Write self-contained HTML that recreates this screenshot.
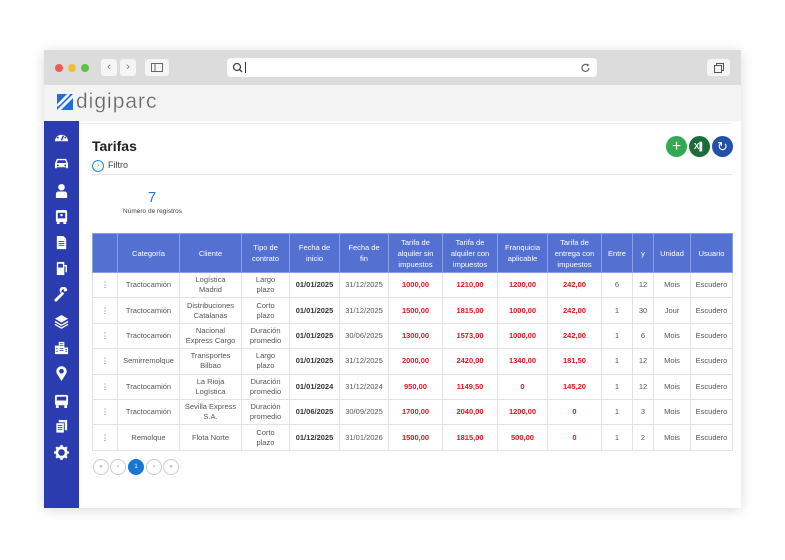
<!DOCTYPE html><html><head><meta charset="utf-8"><style>
*{margin:0;padding:0;box-sizing:border-box}
body{width:785px;height:560px;background:#fff;font-family:"Liberation Sans",sans-serif;position:relative;overflow:hidden}
.win{position:absolute;left:44px;top:50px;width:697px;height:458px;box-shadow:0 2px 12px rgba(0,0,0,.15);background:#fff}
.tb{position:absolute;left:0;top:0;width:697px;height:35px;background:#dcdcdc}
.dot{position:absolute;top:14px;width:8px;height:8px;border-radius:50%}
.btn{position:absolute;top:9px;height:17px;background:#f5f5f5;border-radius:3px;color:#777;font-size:11px;text-align:center;line-height:16px}
.url{position:absolute;left:183px;top:8px;width:370px;height:19px;background:#fff;border-radius:4px}
.lb{position:absolute;left:0;top:35px;width:697px;height:36px;background:#f3f3f3}
.side{position:absolute;left:0;top:71px;width:35px;height:387px;background:#2a3cb0}
.side svg{position:absolute;left:10px;width:15px;height:15px}
table{position:absolute;left:92px;top:233px;border-collapse:collapse;font-size:7.5px;color:#555;table-layout:fixed}
th{background:#5471d1;color:#fff;font-weight:normal;height:39px;border:1px solid #8aa0e4;font-size:7.5px;line-height:11px}
td{height:25.4px;border:1px solid #e2e2e2;text-align:center;line-height:10px}
.r{color:#e0141e;font-weight:bold}.b{color:#333;font-weight:bold}
.pg{position:absolute;top:459px;width:16px;height:16px;border:1px solid #ccc;border-radius:50%;font-size:6px;color:#888;text-align:center;line-height:14px;background:#fff}
.cb{position:absolute;top:136px;width:21px;height:21px;border-radius:50%;color:#fff;text-align:center;line-height:21px;font-size:16px}
</style></head><body>
<div class="win">
<div class="tb">
<div class="dot" style="left:11px;background:#ee5b52"></div><div class="dot" style="left:24px;background:#f4bd36"></div><div class="dot" style="left:37px;background:#5ac144"></div>
<div class="btn" style="left:57px;width:16px">‹</div><div class="btn" style="left:76px;width:16px">›</div>
<div class="btn" style="left:101px;width:24px"><svg width="12" height="9" style="margin-top:4px"><rect x="0.5" y="0.5" width="11" height="8" fill="none" stroke="#666"/><line x1="4" y1="0" x2="4" y2="9" stroke="#666"/></svg></div>
<div class="url"><svg width="12" height="12" style="position:absolute;left:5px;top:4px"><circle cx="5" cy="5" r="3.5" fill="none" stroke="#444" stroke-width="1.3"/><line x1="7.5" y1="7.5" x2="10" y2="10" stroke="#444" stroke-width="1.3"/></svg><div style="position:absolute;left:18px;top:4px;width:1px;height:11px;background:#333"></div><svg width="10" height="10" style="position:absolute;right:6px;top:5px"><path d="M8 5A3.5 3.5 0 1 1 6.5 2" fill="none" stroke="#666" stroke-width="1.2"/><path d="M6 0.5L8.5 2 6 3.5Z" fill="#666"/></svg></div>
<div class="btn" style="left:663px;width:23px;background:#f5f5f5"><svg width="10" height="10" style="margin-top:4px"><rect x="0.5" y="2.5" width="7" height="7" fill="none" stroke="#555"/><path d="M2.5 2.5V0.5H9.5V7.5H7.5" fill="none" stroke="#555"/></svg></div>
</div>
<div class="lb"><svg width="16" height="16" style="position:absolute;left:13px;top:9px"><path d="M0 0H16L0 16Z" fill="#1f6fd4"/><path d="M4 16L16 4V16Z" fill="#1f6fd4"/><path d="M0 12L12 0" stroke="#fff" stroke-width="2.5"/></svg><span style="position:absolute;left:32px;top:5px;font-size:21px;color:#666;letter-spacing:1px;-webkit-text-stroke:0.3px #f3f3f3">digiparc</span></div>
<div class="side">
<svg style="top:9px" viewBox="0 0 16 16"><path d="M1 12A7 7 0 1 1 15 12Z" fill="#fff"/><path d="M8 11L10 6" stroke="#2a3cb0" stroke-width="1.5"/><circle cx="4" cy="8" r="1" fill="#2a3cb0"/><circle cx="12" cy="8" r="1" fill="#2a3cb0"/><circle cx="8" cy="4" r="1" fill="#2a3cb0"/></svg>
<svg style="top:35px" viewBox="0 0 16 16"><path d="M1 8L3 3H13L15 8V13H13V12H3V13H1Z" fill="#fff"/><path d="M4 4.5H12L13 7.5H3Z" fill="#2a3cb0"/><circle cx="4" cy="10" r="1" fill="#2a3cb0"/><circle cx="12" cy="10" r="1" fill="#2a3cb0"/></svg>
<svg style="top:62px" viewBox="0 0 16 16"><circle cx="8" cy="4.5" r="3.5" fill="#fff"/><path d="M2 16V12Q2 9 5 9H11Q14 9 14 12V16Z" fill="#fff"/></svg>
<svg style="top:88px" viewBox="0 0 16 16"><rect x="2" y="1" width="12" height="13" rx="2" fill="#fff"/><rect x="4" y="4" width="8" height="6" fill="#2a3cb0"/><circle cx="8" cy="6.5" r="1.3" fill="#fff"/><rect x="3" y="14" width="3" height="2" fill="#fff"/><rect x="10" y="14" width="3" height="2" fill="#fff"/></svg>
<svg style="top:114px" viewBox="0 0 16 16"><path d="M3 1H10L13 4V15H3Z" fill="#fff"/><path d="M5 7H11M5 9H11M5 11H11" stroke="#2a3cb0"/></svg>
<svg style="top:140px" viewBox="0 0 16 16"><rect x="3" y="1" width="8" height="14" fill="#fff"/><rect x="4.5" y="3" width="5" height="4" fill="#2a3cb0"/><path d="M11 5H13V12" stroke="#fff" stroke-width="1.5" fill="none"/></svg>
<svg style="top:166px" viewBox="0 0 16 16"><path d="M2 14L9 7" stroke="#fff" stroke-width="3" stroke-linecap="round"/><path d="M8 7A4 4 0 1 1 14 4L11 5L10 2A4 4 0 0 0 8 7Z" fill="#fff"/></svg>
<svg style="top:193px" viewBox="0 0 16 16"><path d="M8 1L15 5L8 9L1 5Z" fill="#fff"/><path d="M1 8L8 12L15 8M1 11L8 15L15 11" stroke="#fff" stroke-width="1.5" fill="none"/></svg>
<svg style="top:219px" viewBox="0 0 16 16"><path d="M1 15V6H5V2H11V8H15V15Z" fill="#fff"/><path d="M6 4H10M6 6H10M6 9H10M6 11H10M2 9H4M2 12H4M12 10H14M12 12H14" stroke="#2a3cb0" stroke-width="0.8"/></svg>
<svg style="top:245px" viewBox="0 0 16 16"><path d="M8 16L3 8A5.5 5.5 0 1 1 13 8Z" fill="#fff"/><circle cx="8" cy="5.5" r="2.5" fill="#2a3cb0"/></svg>
<svg style="top:272px" viewBox="0 0 16 16"><rect x="1" y="2" width="14" height="11" rx="2" fill="#fff"/><rect x="3" y="4" width="10" height="4" fill="#2a3cb0"/><rect x="2" y="13" width="3" height="3" fill="#fff"/><rect x="11" y="13" width="3" height="3" fill="#fff"/></svg>
<svg style="top:298px" viewBox="0 0 16 16"><rect x="5" y="1" width="9" height="11" fill="#fff"/><rect x="2" y="4" width="9" height="11" fill="#fff" stroke="#2a3cb0"/><path d="M4 7H9M4 9H9M4 11H9" stroke="#2a3cb0"/></svg>
<svg style="top:324px" viewBox="0 0 16 16"><circle cx="8" cy="8" r="5" fill="none" stroke="#fff" stroke-width="3"/><path d="M8 0V3M8 13V16M0 8H3M13 8H16M2.3 2.3L4.5 4.5M11.5 11.5L13.7 13.7M2.3 13.7L4.5 11.5M11.5 4.5L13.7 2.3" stroke="#fff" stroke-width="2.5"/><circle cx="8" cy="8" r="2" fill="#2a3cb0"/></svg>
</div>
</div>
<div style="position:absolute;left:79px;top:123px;width:653px;height:1px;background:#eee"></div>
<div style="position:absolute;left:92px;top:138px;font-size:14px;font-weight:bold;color:#222">Tarifas</div>
<div style="position:absolute;left:92px;top:160px;width:12px;height:12px;border:1px solid #2a8ad8;border-radius:50%;font-size:7px;color:#2a8ad8;text-align:center;line-height:10px">›</div>
<div style="position:absolute;left:108px;top:160px;font-size:9px;color:#444">Filtro</div>
<div style="position:absolute;left:92px;top:174px;width:640px;height:1px;background:#e5e5e5"></div>
<div class="cb" style="left:666px;background:#34a853">+</div>
<div class="cb" style="left:689px;background:#1d6b3b;font-size:8px;font-weight:bold">X▌</div>
<div class="cb" style="left:712px;background:#2350a8;font-size:13px">↻</div>
<div style="position:absolute;left:142px;top:189px;font-size:15px;color:#2a7ad8;width:20px;text-align:center">7</div>
<div style="position:absolute;left:110px;top:208px;width:85px;font-size:6.5px;color:#444;text-align:center">Número de registros</div>
<table>
<colgroup><col style="width:25px"><col style="width:62px"><col style="width:62px"><col style="width:48px"><col style="width:50px"><col style="width:49px"><col style="width:54px"><col style="width:55px"><col style="width:50px"><col style="width:54px"><col style="width:31px"><col style="width:21px"><col style="width:37px"><col style="width:42px"></colgroup>
<tr><th></th><th>Categoría</th><th>Cliente</th><th>Tipo de<br>contrato</th><th>Fecha de<br>inicio</th><th>Fecha de<br>fin</th><th>Tarifa de<br>alquiler sin<br>impuestos</th><th>Tarifa de<br>alquiler con<br>impuestos</th><th>Franquicia<br>aplicable</th><th>Tarifa de<br>entrega con<br>impuestos</th><th>Entre</th><th>y</th><th>Unidad</th><th>Usuario</th></tr>
<tr><td>⋮</td><td>Tractocamión</td><td>Logística<br>Madrid</td><td>Largo<br>plazo</td><td class="b">01/01/2025</td><td>31/12/2025</td><td class="r">1000,00</td><td class="r">1210,00</td><td class="r">1200,00</td><td class="r">242,00</td><td>6</td><td>12</td><td>Mois</td><td>Escudero</td></tr>
<tr><td>⋮</td><td>Tractocamión</td><td>Distribuciones<br>Catalanas</td><td>Corto<br>plazo</td><td class="b">01/01/2025</td><td>31/12/2025</td><td class="r">1500,00</td><td class="r">1815,00</td><td class="r">1000,00</td><td class="r">242,00</td><td>1</td><td>30</td><td>Jour</td><td>Escudero</td></tr>
<tr><td>⋮</td><td>Tractocamión</td><td>Nacional<br>Express Cargo</td><td>Duración<br>promedio</td><td class="b">01/01/2025</td><td>30/06/2025</td><td class="r">1300,00</td><td class="r">1573,00</td><td class="r">1000,00</td><td class="r">242,00</td><td>1</td><td>6</td><td>Mois</td><td>Escudero</td></tr>
<tr><td>⋮</td><td>Semirremolque</td><td>Transportes<br>Bilbao</td><td>Largo<br>plazo</td><td class="b">01/01/2025</td><td>31/12/2025</td><td class="r">2000,00</td><td class="r">2420,00</td><td class="r">1340,00</td><td class="r">181,50</td><td>1</td><td>12</td><td>Mois</td><td>Escudero</td></tr>
<tr><td>⋮</td><td>Tractocamión</td><td>La Rioja<br>Logística</td><td>Duración<br>promedio</td><td class="b">01/01/2024</td><td>31/12/2024</td><td class="r">950,00</td><td class="r">1149,50</td><td class="r">0</td><td class="r">145,20</td><td>1</td><td>12</td><td>Mois</td><td>Escudero</td></tr>
<tr><td>⋮</td><td>Tractocamión</td><td>Sevilla Express<br>S.A.</td><td>Duración<br>promedio</td><td class="b">01/06/2025</td><td>30/09/2025</td><td class="r">1700,00</td><td class="r">2040,00</td><td class="r">1200,00</td><td class="r">0</td><td>1</td><td>3</td><td>Mois</td><td>Escudero</td></tr>
<tr><td>⋮</td><td>Remolque</td><td>Flota Norte</td><td>Corto<br>plazo</td><td class="b">01/12/2025</td><td>31/01/2026</td><td class="r">1500,00</td><td class="r">1815,00</td><td class="r">500,00</td><td class="r">0</td><td>1</td><td>2</td><td>Mois</td><td>Escudero</td></tr>
</table>
<div class="pg" style="left:93px">«</div><div class="pg" style="left:110px">‹</div><div class="pg" style="left:128px;background:#1577d2;border-color:#1577d2;color:#fff">1</div><div class="pg" style="left:146px">›</div><div class="pg" style="left:163px">»</div>
</body></html>
